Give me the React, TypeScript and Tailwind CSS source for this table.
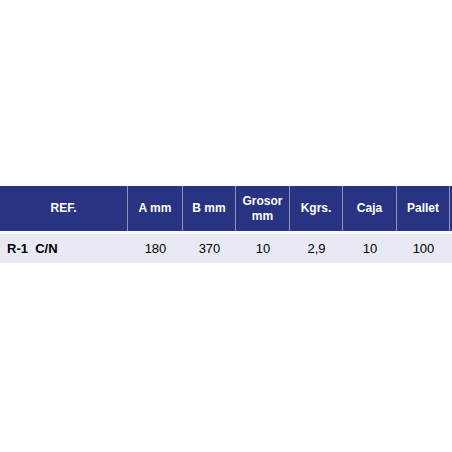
const COLS = [
  { key: "ref", label: "REF.", w: "w-[128px]" },
  { key: "a", label: "A mm", w: "w-[55px]" },
  { key: "b", label: "B mm", w: "w-[53px]" },
  { key: "g", label: "Grosor mm", w: "w-[54px]" },
  { key: "k", label: "Kgrs.", w: "w-[53px]" },
  { key: "c", label: "Caja", w: "w-[54px]" },
  { key: "p", label: "Pallet", w: "w-[53px]" },
];

const ROW = ["180", "370", "10", "2,9", "10", "100"];

export default function App() {
  return (
    <div className="w-[452px] h-[452px] bg-white overflow-hidden font-['Liberation_Sans',Arial,sans-serif]">
      <div className="pt-[186px] w-[470px]">
        {/* header */}
        <div className="flex h-[45px] bg-[#283382] text-white font-bold text-[12px] leading-[15px]">
          {COLS.map((c) => (
            <div
              key={c.key}
              className={`${c.w} shrink-0 border-r border-[#8d93bf] flex items-center justify-center text-center px-1`}
            >
              {c.key === "g" ? (
                <span>
                  Grosor
                  <br />
                  mm
                </span>
              ) : (
                c.label
              )}
            </div>
          ))}
          <div className="flex-1" />
        </div>

        {/* data */}
        <div className="mt-[3px] flex h-[29px] bg-[#e9e9f3] text-[13px] text-black items-center">
          <div className="w-[128px] shrink-0 pl-[7px] font-bold">R-1&nbsp;&nbsp;C/N</div>
          {ROW.map((v, i) => (
            <div
              key={i}
              className={`${COLS[i + 1].w} shrink-0 text-center`}
            >
              {v}
            </div>
          ))}
        </div>
      </div>
    </div>
  );
}
